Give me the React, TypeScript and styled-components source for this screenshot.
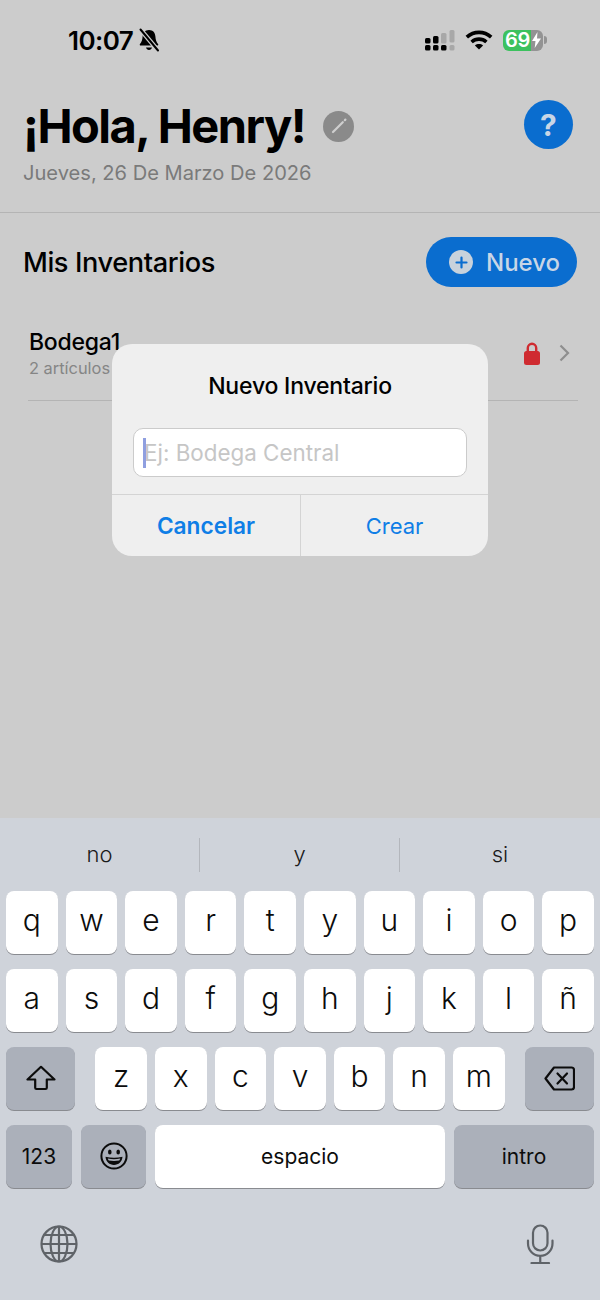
import * as React from 'react';
import styled, { createGlobalStyle } from 'styled-components';

const GlobalStyle = createGlobalStyle`
  html, body {
    margin: 0;
    padding: 0;
    background: #cccccc;
  }

  * {
    box-sizing: border-box;
  }
`;

const Screen = styled.div`
  position: relative;
  display: flex;
  flex-direction: column;
  width: 600px;
  height: 1300px;
  overflow: hidden;
  background: #cccccc;
  color: #000;
  font-family: Inter, 'Liberation Sans', sans-serif;
`;

const Main = styled.div`
  flex: 1;
`;

const StatusBar = styled.div`
  display: flex;
  align-items: center;
  justify-content: space-between;
  height: 80px;
  padding: 0 53px 0 68px;
`;

const StatusGroup = styled.div<{ $gap: number }>`
  display: flex;
  align-items: center;
  gap: ${({ $gap }) => $gap}px;
`;

const Clock = styled.span`
  font-size: 26px;
  font-weight: 600;
  letter-spacing: -0.6px;
`;

const Battery = styled.div`
  display: flex;
  align-items: center;
  justify-content: space-between;
  width: 40px;
  height: 21px;
  padding: 0 2px 0 2px;
  border-radius: 6px;
  background: linear-gradient(90deg, #3cc15e 0 70%, #939393 70% 100%);
  color: #fff;
  font-size: 20px;
  font-weight: 600;
  letter-spacing: -0.4px;
`;

const BatteryCap = styled.div`
  width: 3px;
  height: 8px;
  margin-left: 1px;
  border-radius: 0 3px 3px 0;
  background: #939393;
`;

const GreetingHeader = styled.header`
  display: flex;
  justify-content: space-between;
  height: 133px;
  padding: 20px 27px 0 23px;
  border-bottom: 1px solid #b4b4b4;
`;

const TitleRow = styled.div`
  display: flex;
  align-items: center;
  gap: 18px;
`;

const Title = styled.h1`
  margin: 0;
  font-size: 47px;
  line-height: 52px;
  font-weight: 700;
  letter-spacing: -1.5px;
  white-space: nowrap;
`;

const DateText = styled.div`
  margin-top: 8px;
  color: #7a7a7a;
  font-size: 20.1px;
  line-height: 26px;
`;

const EditBadge = styled.div`
  display: flex;
  align-items: center;
  justify-content: center;
  width: 31px;
  height: 31px;
  border-radius: 50%;
  background: #8a8a8a;
`;

const HelpButton = styled.div`
  display: flex;
  align-items: center;
  justify-content: center;
  width: 49px;
  height: 49px;
  border-radius: 50%;
  background: #0a6dcf;
  color: #c8d6e6;
  font-size: 30px;
  font-weight: 700;
`;

const SectionRow = styled.div`
  display: flex;
  align-items: center;
  justify-content: space-between;
  padding: 24px 23px 0;
`;

const SectionTitle = styled.h2`
  margin: 0;
  font-size: 27.2px;
  font-weight: 500;
  letter-spacing: -0.4px;
`;

const NewButton = styled.div`
  display: flex;
  align-items: center;
  gap: 13px;
  width: 151px;
  height: 50px;
  padding-left: 23px;
  border-radius: 25px;
  background: #0a6dcf;
  color: #c8d6e6;
  font-size: 24px;
  font-weight: 500;
`;

const PlusCircle = styled.div`
  display: flex;
  align-items: center;
  justify-content: center;
  width: 24px;
  height: 24px;
  border-radius: 50%;
  background: #c8d2dc;
`;

const InventoryRow = styled.div`
  display: flex;
  align-items: center;
  justify-content: space-between;
  height: 83px;
  margin: 31px 22px 0 28px;
  padding: 0 8px 12px 1px;
  border-bottom: 1px solid #b4b4b4;
`;

const InventoryName = styled.div`
  font-size: 23px;
  line-height: 29px;
  font-weight: 550;
  letter-spacing: -0.25px;
`;

const InventoryCount = styled.div`
  color: #858585;
  font-size: 16.4px;
  line-height: 22px;
`;

const RowActions = styled.div`
  display: flex;
  align-items: center;
  gap: 19px;
`;

const Dialog = styled.div`
  position: absolute;
  top: 344px;
  left: 112px;
  width: 376px;
  height: 212px;
  border-radius: 20px;
  background: #efefef;
  overflow: hidden;
`;

const DialogTitle = styled.div`
  padding-top: 28px;
  font-size: 23px;
  line-height: 28px;
  font-weight: 550;
  letter-spacing: -0.2px;
  text-align: center;
`;

const InputBox = styled.div`
  position: relative;
  display: flex;
  align-items: center;
  height: 49px;
  margin: 28px 21px 17px;
  padding-left: 10px;
  border: 1px solid #cbcbcb;
  border-radius: 10px;
  background: #fff;
  color: #c6c6c6;
  font-size: 22.4px;
`;

const Caret = styled.div`
  position: absolute;
  top: 9px;
  left: 9px;
  width: 2.5px;
  height: 30px;
  background: #8f9fe0;
`;

const DialogActions = styled.div`
  display: grid;
  grid-template-columns: 188px 188px;
  height: 62px;
  border-top: 1px solid #d4d4d4;
`;

const DialogAction = styled.div<{ $bold?: boolean }>`
  display: flex;
  align-items: center;
  justify-content: center;
  color: #0f7ee6;
  font-size: ${({ $bold }) => ($bold ? 22.7 : 22)}px;
  font-weight: ${({ $bold }) => ($bold ? 600 : 400)};
  border-left: ${({ $bold }) => ($bold ? 'none' : '1px solid #d4d4d4')};
`;

const Keyboard = styled.div`
  height: 482px;
  background: #cfd3da;
`;

const Suggestions = styled.div`
  display: grid;
  grid-template-columns: 199px 200px 201px;
  align-items: center;
  height: 73px;
`;

const Suggestion = styled.div<{ $divided?: boolean }>`
  height: 34px;
  line-height: 32px;
  text-align: center;
  font-size: 22px;
  font-weight: 350;
  color: #1a1a1a;
  border-left: ${({ $divided }) => ($divided ? '1px solid #b3b6bc' : 'none')};
`;

const KeyRow = styled.div`
  display: flex;
  justify-content: space-between;
  height: 63px;
  margin-bottom: 15px;
  padding: 0 6px;
`;

const LetterGroup = styled.div<{ $gap: number }>`
  display: flex;
  gap: ${({ $gap }) => $gap}px;
`;

const Key = styled.div<{ $width?: number; $dark?: boolean; $small?: boolean }>`
  display: flex;
  align-items: center;
  justify-content: center;
  flex: none;
  width: ${({ $width }) => $width ?? 51.6}px;
  height: 63px;
  padding-bottom: ${({ $small }) => ($small ? 1 : 5)}px;
  border-radius: 8px;
  background: ${({ $dark }) => ($dark ? '#abb0ba' : '#ffffff')};
  box-shadow: 0 1px 0 #898b90;
  color: #0c0c0c;
  font-size: ${({ $small }) => ($small ? 21 : 30)}px;
  font-weight: ${({ $small }) => ($small ? 400 : 350)};
`;

const KeyboardFooter = styled.div`
  display: flex;
  align-items: center;
  justify-content: space-between;
  padding: 21px 46px 0 40px;
`;

const BellOffIcon = () => (
  <svg width="22" height="24" viewBox="0 0 22 24">
    <path d="M11 2c-4 0-6.200 2.800-6.400 6.500-.2 3.500-1 5.500-2.600 7.400-.6.700-.2 1.600.7 1.600h16.600c.9 0 1.300-.9.700-1.600-1.600-1.900-2.400-3.900-2.600-7.400C17.200 4.800 15 2 11 2z" fill="#000" />
    <path d="M8 19.500c.4 1.500 1.500 2.500 3 2.500s2.600-1 3-2.500z" fill="#000" />
    <path d="M2.500 1.500 20 22.500" stroke="#ccc" strokeWidth="4.500" />
    <path d="M2.500 1.500 20 22.500" stroke="#000" strokeWidth="2" strokeLinecap="round" />
  </svg>
);

const SignalIcon = () => (
  <svg width="30" height="21" viewBox="0 0 30 21" fill="#000">
    <rect x="0" y="15" width="5.500" height="5.500" rx="1.500" />
    <rect x="0" y="8" width="5.500" height="5.500" rx="1.500" />
    <rect x="8" y="15" width="5.500" height="5.500" rx="1.500" />
    <rect x="8" y="6" width="5.500" height="7.500" rx="1.500" />
    <rect x="16" y="15" width="5.500" height="5.500" rx="1.500" />
    <rect x="16" y="3" width="5.500" height="10.500" rx="1.500" fill="#a8a8a8" />
    <rect x="24.500" y="15" width="5" height="5.500" rx="1.500" fill="#a8a8a8" />
    <rect x="24.500" y="0" width="5" height="12.500" rx="1.500" fill="#a8a8a8" />
  </svg>
);

const WifiIcon = () => (
  <svg width="28" height="20" viewBox="0 0 28 20" fill="none" stroke="#000" strokeWidth="3.600">
    <path d="M1.800 7.200C8.800.8 19.200.8 26.200 7.200" />
    <path d="M6.600 12c4.400-3.800 10.400-3.800 14.800 0" />
    <path d="M14 19.500 9.900 15.400c2.400-1.900 5.800-1.900 8.200 0z" fill="#000" stroke="none" />
  </svg>
);

const BoltIcon = () => (
  <svg width="9" height="16" viewBox="0 0 9 16" fill="#fff">
    <path d="M5.500 0 0 9h3.500L2.700 16 9 6.500H5z" />
  </svg>
);

const PencilIcon = () => (
  <svg width="18" height="18" viewBox="0 0 18 18" fill="none" stroke="#cfcfcf" strokeLinecap="round">
    <path d="M3 15 12.800 5.200" strokeWidth="2.200" />
    <path d="M14.800 3.200 15.400 2.600" strokeWidth="2.200" />
  </svg>
);

const PlusIcon = () => (
  <svg width="13" height="13" viewBox="0 0 13 13" stroke="#0a6dcf" strokeWidth="2.200" strokeLinecap="round">
    <path d="M6.500 1.500v10M1.500 6.500h10" />
  </svg>
);

const LockIcon = () => (
  <svg width="16" height="23" viewBox="0 0 16 23">
    <path d="M3.800 10V6a4.200 4.200 0 0 1 8.400 0V10" fill="none" stroke="#cf2b30" strokeWidth="2.400" />
    <rect x="0" y="9" width="16" height="14" rx="2.500" fill="#cf2b30" />
  </svg>
);

const ChevronIcon = () => (
  <svg width="11" height="18" viewBox="0 0 11 18" fill="none" stroke="#8e8e8e" strokeWidth="2.200">
    <path d="M1.500 1.500 9 9 1.500 16.500" />
  </svg>
);

const ShiftIcon = () => (
  <svg width="30" height="26" viewBox="0 0 30 26" fill="none" stroke="#0c0c0c" strokeWidth="2.200" strokeLinejoin="round">
    <path d="M15 1.800 1.500 14.500h7.700v8.200c0 .8.500 1.300 1.300 1.300h9c.8 0 1.300-.5 1.300-1.300v-8.200h7.700z" />
  </svg>
);

const DeleteIcon = () => (
  <svg width="31" height="25" viewBox="0 0 31 25" fill="none" stroke="#0c0c0c" strokeWidth="2.200" strokeLinejoin="round">
    <path d="M10 1.500h17.500c1.600 0 2.500.9 2.500 2.500v17c0 1.600-.9 2.500-2.500 2.500H10L1.500 12.500z" />
    <path d="M13.500 7.500 23 17.500M23 7.500 13.500 17.500" strokeLinecap="round" />
  </svg>
);

const EmojiIcon = () => (
  <svg width="28" height="28" viewBox="0 0 28 28">
    <circle cx="14" cy="14" r="12.600" fill="none" stroke="#0c0c0c" strokeWidth="2" />
    <ellipse cx="9.800" cy="10" rx="1.800" ry="2.500" fill="#0c0c0c" />
    <ellipse cx="18.200" cy="10" rx="1.800" ry="2.500" fill="#0c0c0c" />
    <path d="M5.500 14.800c5.500 1.400 11.500 1.400 17 0-.4 5-4 8.200-8.500 8.200s-8.100-3.200-8.500-8.200z" fill="#0c0c0c" />
    <path d="M7.800 16.600c4 .8 8.400.8 12.400 0-.3.900-.6 1.500-1 2-3.400.5-7 .5-10.400 0-.4-.5-.7-1.100-1-2z" fill="#abb0ba" />
  </svg>
);

const GlobeIcon = () => (
  <svg width="38" height="38" viewBox="0 0 38 38" fill="none" stroke="#5f6368" strokeWidth="2.200">
    <circle cx="19" cy="19" r="17.500" />
    <ellipse cx="19" cy="19" rx="8.500" ry="17.500" />
    <path d="M19 1.500v35M1.500 19h35M4.200 10h29.600M4.200 28h29.600" />
  </svg>
);

const MicIcon = () => (
  <svg width="28" height="40" viewBox="0 0 28 40" fill="none" stroke="#5f6368" strokeWidth="2.200" strokeLinecap="round">
    <rect x="7" y="1.500" width="14.500" height="25" rx="7.250" />
    <path d="M2 16.500v3a12.250 12.250 0 0 0 24.500 0v-3" />
    <path d="M14.250 32v7M5.500 39h17.500" />
  </svg>
);

const FIRST_ROW = ['q', 'w', 'e', 'r', 't', 'y', 'u', 'i', 'o', 'p'];
const SECOND_ROW = ['a', 's', 'd', 'f', 'g', 'h', 'j', 'k', 'l', 'ñ'];
const THIRD_ROW = ['z', 'x', 'c', 'v', 'b', 'n', 'm'];

const App = () => (
  <Screen>
    <GlobalStyle />
    <Main>
      <StatusBar>
        <StatusGroup $gap={5}>
          <Clock>10:07</Clock>
          <BellOffIcon />
        </StatusGroup>
        <StatusGroup $gap={10}>
          <SignalIcon />
          <WifiIcon />
          <StatusGroup $gap={0}>
            <Battery>
              69
              <BoltIcon />
            </Battery>
            <BatteryCap />
          </StatusGroup>
        </StatusGroup>
      </StatusBar>
      <GreetingHeader>
        <div>
          <TitleRow>
            <Title>¡Hola, Henry!</Title>
            <EditBadge>
              <PencilIcon />
            </EditBadge>
          </TitleRow>
          <DateText>Jueves, 26 De Marzo De 2026</DateText>
        </div>
        <HelpButton>?</HelpButton>
      </GreetingHeader>
      <SectionRow>
        <SectionTitle>Mis Inventarios</SectionTitle>
        <NewButton>
          <PlusCircle>
            <PlusIcon />
          </PlusCircle>
          Nuevo
        </NewButton>
      </SectionRow>
      <InventoryRow>
        <div>
          <InventoryName>Bodega1</InventoryName>
          <InventoryCount>2 artículos</InventoryCount>
        </div>
        <RowActions>
          <LockIcon />
          <ChevronIcon />
        </RowActions>
      </InventoryRow>
    </Main>
    <Dialog>
      <DialogTitle>Nuevo Inventario</DialogTitle>
      <InputBox>
        <Caret />
        Ej: Bodega Central
      </InputBox>
      <DialogActions>
        <DialogAction $bold>Cancelar</DialogAction>
        <DialogAction>Crear</DialogAction>
      </DialogActions>
    </Dialog>
    <Keyboard>
      <Suggestions>
        <Suggestion>no</Suggestion>
        <Suggestion $divided>y</Suggestion>
        <Suggestion $divided>si</Suggestion>
      </Suggestions>
      <KeyRow>
        {FIRST_ROW.map((letter) => (
          <Key key={letter}>{letter}</Key>
        ))}
      </KeyRow>
      <KeyRow>
        {SECOND_ROW.map((letter) => (
          <Key key={letter}>{letter}</Key>
        ))}
      </KeyRow>
      <KeyRow>
        <Key $dark $width={69} $small>
          <ShiftIcon />
        </Key>
        <LetterGroup $gap={8}>
          {THIRD_ROW.map((letter) => (
            <Key key={letter}>{letter}</Key>
          ))}
        </LetterGroup>
        <Key $dark $width={69} $small>
          <DeleteIcon />
        </Key>
      </KeyRow>
      <KeyRow>
        <LetterGroup $gap={9}>
          <Key $dark $width={66} $small>
            123
          </Key>
          <Key $dark $width={65} $small>
            <EmojiIcon />
          </Key>
          <Key $width={290} $small>
            espacio
          </Key>
        </LetterGroup>
        <Key $dark $width={140} $small>
          intro
        </Key>
      </KeyRow>
      <KeyboardFooter>
        <GlobeIcon />
        <MicIcon />
      </KeyboardFooter>
    </Keyboard>
  </Screen>
);

export default App;
